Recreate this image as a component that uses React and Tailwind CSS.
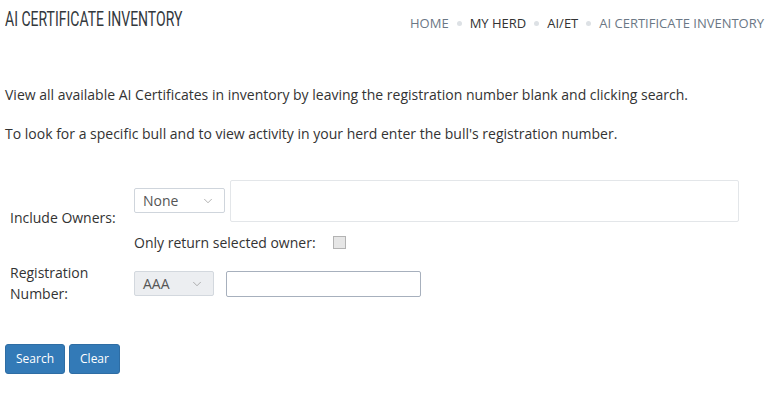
import { ChevronDown } from 'lucide-react';

const crumbs = [
  { label: 'HOME', dim: true },
  { label: 'MY HERD', dim: false },
  { label: 'AI/ET', dim: false },
  { label: 'AI CERTIFICATE INVENTORY', dim: true },
];

function Select({ value, disabled, width }) {
  return (
    <div
      className={`flex items-center justify-between h-[25px] pl-2 pr-[9px] border rounded-[2px] ${width} ${
        disabled ? 'bg-[#eceef1] border-[#d3d8de]' : 'bg-white border-[#cfd5dc]'
      }`}
    >
      <span className="text-[14px] text-[#555]">{value}</span>
      <ChevronDown size={14} strokeWidth={1.1} className="text-[#888]" />
    </div>
  );
}

export default function App() {
  return (
    <div className="w-[784px] h-[400px] bg-white font-['Open_Sans',sans-serif] text-[#333] text-[14px]">
      {/* header */}
      <div className="flex items-start justify-between pl-[5px] pr-[20px] pt-[6px] h-[32px]">
        <h1 className="inline-block origin-left scale-x-[0.7] whitespace-nowrap font-['Roboto',sans-serif] font-normal text-[20px] leading-[26px] text-[#33383d]">
          AI CERTIFICATE INVENTORY
        </h1>
        <nav className="flex items-center pt-[8px] text-[13px] leading-[18px]">
          {crumbs.map((c, i) => (
            <div key={c.label} className="flex items-center">
              {i > 0 && <span className="mx-[8px] w-[5px] h-[5px] rounded-full bg-[#dde1e5]" />}
              <span className={c.dim ? 'text-[#6b7785]' : 'text-[#333]'}>{c.label}</span>
            </div>
          ))}
        </nav>
      </div>

      {/* intro */}
      <div className="pl-[5px] pt-[53px] leading-[20px]">
        <p>View all available AI Certificates in inventory by leaving the registration number blank and clicking search.</p>
        <p className="mt-[19px]">To look for a specific bull and to view activity in your herd enter the bull's registration number.</p>
      </div>

      {/* form */}
      <div className="pt-[36px] pl-[10px]">
        <div className="flex">
          <div className="w-[124px] flex items-center pt-[2px]">Include Owners:</div>
          <div className="flex flex-col">
            <div className="flex items-start gap-[5px]">
              <div className="pt-[8px]">
                <Select value="None" width="w-[91px]" />
              </div>
              <div className="w-[509px] h-[42px] border border-[#e3e6e9] rounded-[2px]" />
            </div>
            <div className="flex items-center mt-[10px] h-[20px]">
              <span>Only return selected owner:</span>
              <span className="ml-[17px] w-[13px] h-[13px] border border-[#b3b3b3] bg-[#e6e6e6]" />
            </div>
          </div>
        </div>

        <div className="flex mt-[10px]">
          <div className="w-[124px] leading-[21px]">
            Registration
            <br />
            Number:
          </div>
          <div className="flex items-start gap-[12px] pt-[9px]">
            <Select value="AAA" disabled width="w-[80px]" />
            <div className="w-[195px] h-[26px] border border-[#a7b0bd] rounded-[2px]" />
          </div>
        </div>
      </div>

      <div className="flex gap-[4px] pl-[5px] pt-[40px]">
        <button className="h-[30px] w-[60px] bg-[#337ab7] border border-[#2e6da4] rounded-[3px] text-white text-[12px]">
          Search
        </button>
        <button className="h-[30px] w-[51px] bg-[#337ab7] border border-[#2e6da4] rounded-[3px] text-white text-[12px]">
          Clear
        </button>
      </div>
    </div>
  );
}
